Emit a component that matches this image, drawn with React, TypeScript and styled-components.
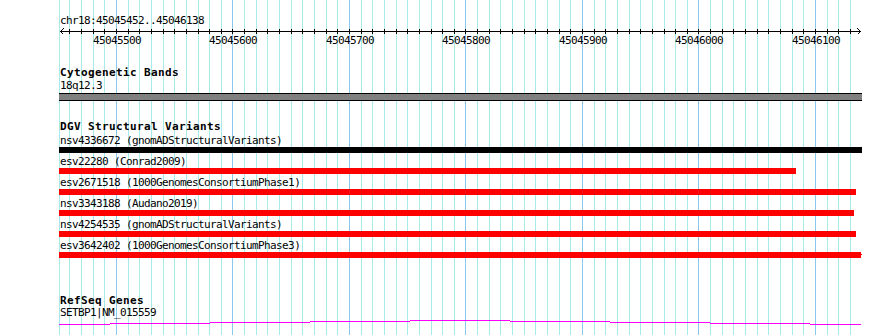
import styled, { createGlobalStyle } from 'styled-components';

const REF_BP = 45045500;
const REF_X = 116;
const PX_PER_BP = 1.165;
const FIRST_TICK = 45045460;
const LAST_TICK = 45046130;

const toX = (bp: number) => Math.floor(REF_X + (bp - REF_BP) * PX_PER_BP + 0.45);

const ticks: number[] = [];
for (let b = FIRST_TICK; b <= LAST_TICK; b += 10) ticks.push(b);
const majors = ticks.filter((b) => b % 100 === 0);

const GlobalStyle = createGlobalStyle`
  html, body {
    margin: 0;
    padding: 0;
    background: #ffffff;
  }
  body {
    font-family: 'DejaVu Sans Mono', 'Liberation Mono', monospace;
    color: #000000;
  }
`;

const Page = styled.div`
  position: relative;
  width: 890px;
  height: 335px;
  overflow: hidden;
  background: #ffffff;
`;

const GridLayer = styled.svg`
  position: absolute;
  inset: 0;
  z-index: 0;
  shape-rendering: crispEdges;
`;

const Tracks = styled.div`
  position: relative;
  z-index: 1;
  display: flex;
  flex-direction: column;
  width: 803px;
  margin-left: 59px;
  padding-top: 15px;
`;

const Label = styled.div<{ $mt?: number; $lh?: number }>`
  height: ${(p) => p.$lh ?? 12}px;
  margin-top: ${(p) => p.$mt ?? 0}px;
  padding-left: 1px;
  font-size: 11px;
  line-height: ${(p) => p.$lh ?? 12}px;
  letter-spacing: -0.62px;
  white-space: nowrap;
`;

const TrackTitle = styled(Label)`
  font-weight: 700;
  letter-spacing: 0.38px;
`;

const Ruler = styled.svg`
  display: block;
  shape-rendering: crispEdges;
  font-family: 'DejaVu Sans Mono', 'Liberation Mono', monospace;
  font-size: 11px;
  letter-spacing: -0.62px;
`;

const Band = styled.div`
  height: 6px;
  margin-top: 1px;
  background: #808080;
  border-top: 1px solid #000000;
  border-bottom: 1px solid #000000;
`;

const VariantList = styled.div`
  display: flex;
  flex-direction: column;
  margin-top: 2px;
`;

const VariantRow = styled.div`
  display: flex;
  flex-direction: column;
  margin-bottom: 3px;
`;

const VariantBar = styled.div<{ $color: string; $tail?: boolean }>`
  position: relative;
  height: 6px;
  background: ${(p) => p.$color};

  ${(p) =>
    p.$tail &&
    `
    &::after {
      content: '';
      position: absolute;
      right: -1px;
      top: 2px;
      width: 1px;
      height: 1px;
      background: ${p.$color};
    }
  `}
`;

const GeneGlyph = styled.svg`
  display: block;
  shape-rendering: crispEdges;
`;

interface Variant {
  id: string;
  source: string;
  end: number;
  color: string;
  tail?: boolean;
}

const variants: Variant[] = [
  { id: 'nsv4336672', source: 'gnomADStructuralVariants', end: 862, color: '#000000' },
  { id: 'esv22280', source: 'Conrad2009', end: 796, color: '#ff0000' },
  { id: 'esv2671518', source: '1000GenomesConsortiumPhase1', end: 856, color: '#ff0000' },
  { id: 'nsv3343188', source: 'Audano2019', end: 854, color: '#ff0000' },
  { id: 'nsv4254535', source: 'gnomADStructuralVariants', end: 856, color: '#ff0000' },
  { id: 'esv3642402', source: '1000GenomesConsortiumPhase3', end: 861, color: '#ff0000', tail: true },
];

// intron "hat" of the gene, stepping one pixel per 100px
const geneSteps = [
  { x1: 59, x2: 110, y: 324 },
  { x1: 110, x2: 210, y: 323 },
  { x1: 210, x2: 310, y: 322 },
  { x1: 310, x2: 410, y: 321 },
  { x1: 410, x2: 510, y: 320 },
  { x1: 510, x2: 610, y: 321 },
  { x1: 610, x2: 710, y: 322 },
  { x1: 710, x2: 810, y: 323 },
  { x1: 810, x2: 861, y: 324 },
];

function Grid() {
  return (
    <GridLayer width={890} height={335}>
      <rect x={59} y={0} width={1} height={335} fill="#a6eaea" />
      {ticks.map((b) => (
        <rect
          key={b}
          x={toX(b)}
          y={0}
          width={1}
          height={335}
          fill={b % 100 === 0 ? '#8ac8ee' : '#a6eaea'}
        />
      ))}
    </GridLayer>
  );
}

function Scale() {
  return (
    <Ruler width={803} height={23} viewBox="59 27 803 23">
      <rect x={60} y={31} width={801} height={1} fill="#000" />
      <polyline points="63.5,28.5 60.5,31.5 63.5,34.5" fill="none" stroke="#000" strokeWidth={1} />
      <polyline points="857.5,28.5 860.5,31.5 857.5,34.5" fill="none" stroke="#000" strokeWidth={1} />
      {ticks.map((b) => (
        <rect key={b} x={toX(b)} y={29} width={1} height={5} fill="#000" />
      ))}
      {majors.map((b) => (
        <text key={b} x={toX(b) + 1} y={44} textAnchor="middle" fill="#000">
          {b}
        </text>
      ))}
    </Ruler>
  );
}

export default function App() {
  return (
    <Page>
      <GlobalStyle />
      <Grid />
      <Tracks>
        <Label>chr18:45045452..45046138</Label>
        <Scale />

        <TrackTitle $mt={17}>Cytogenetic Bands</TrackTitle>
        <Label $mt={1}>18q12.3</Label>
        <Band />

        <TrackTitle $mt={20}>DGV Structural Variants</TrackTitle>
        <VariantList>
          {variants.map((v) => (
            <VariantRow key={v.id}>
              <Label>
                {v.id} ({v.source})
              </Label>
              <VariantBar $color={v.color} $tail={v.tail} style={{ width: v.end - 59 }} />
            </VariantRow>
          ))}
        </VariantList>

        <TrackTitle $mt={34}>RefSeq Genes</TrackTitle>
        <Label $lh={11}>SETBP1|NM_015559</Label>
        <GeneGlyph width={803} height={17} viewBox="59 318 803 17">
          {geneSteps.map((s) => (
            <rect key={s.x1} x={s.x1} y={s.y} width={s.x2 - s.x1} height={1} fill="#ff00ff" />
          ))}
        </GeneGlyph>
      </Tracks>
    </Page>
  );
}
